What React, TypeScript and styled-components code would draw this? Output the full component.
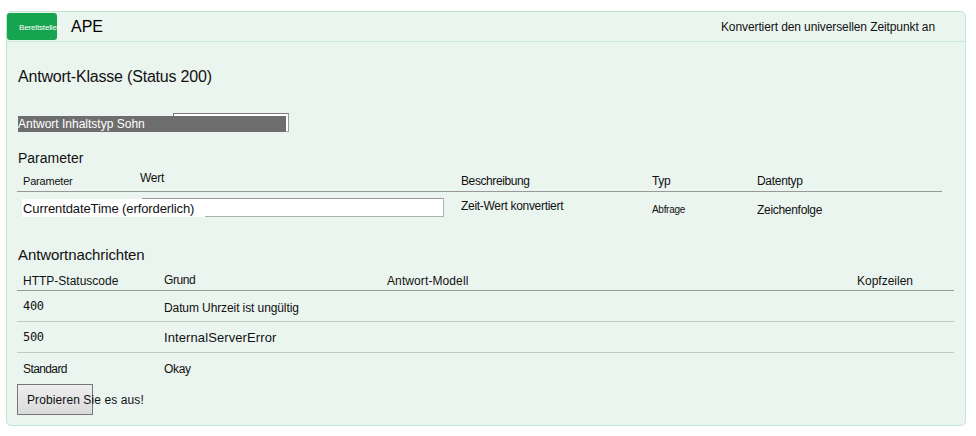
import React from "react";
import styled, { createGlobalStyle } from "styled-components";

const GlobalStyle = createGlobalStyle`
  html, body { margin: 0; padding: 0; background: #ffffff; }
  body { font-family: "Liberation Sans", Arial, sans-serif; color: #111; }
`;

const Page = styled.div`
  padding: 11px 10px 11px 6px;
`;

const Panel = styled.section`
  width: 958px;
  border: 1px solid #c3e6d0;
  border-radius: 5px;
  background: #ebf5ef;
  padding-bottom: 10px;
`;

const Header = styled.header`
  display: flex;
  align-items: center;
  height: 29px;
  border-bottom: 1px solid #c8e8d5;
`;

const DeployButton = styled.button`
  width: 50px;
  height: 27px;
  margin: 0;
  padding: 1px 0 0 12px;
  text-align: left;
  border: none;
  border-radius: 3px;
  background: #17a44e;
  color: #fff;
  font-family: "Liberation Sans", Arial, sans-serif;
  font-size: 8px;
  letter-spacing: -0.15px;
  white-space: nowrap;
  overflow: visible;
`;

const Title = styled.span`
  margin-left: 14px;
  font-size: 16px;
  color: #000;
`;

const Summary = styled.span`
  margin-left: auto;
  margin-right: 30px;
  font-size: 12px;
  letter-spacing: -0.1px;
  color: #111;
`;

const Body = styled.div`
  padding: 0 0 0 10px;
`;

const ClassHeading = styled.h2`
  margin: 25px 0 0 1px;
  font-size: 16px;
  font-weight: normal;
  line-height: 20px;
  letter-spacing: -0.2px;
`;

const ContentTypeRow = styled.div`
  display: grid;
  margin: 26px 0 0 1px;
  width: 271px;
  height: 20px;
`;

const ContentTypeSelect = styled.div`
  grid-area: 1 / 1;
  justify-self: end;
  width: 114px;
  height: 17px;
  background: #fff;
  border: 1px solid #7a7a7a;
  border-bottom-color: #aaa;
  border-right-color: #999;
`;

const ContentTypeLabel = styled.span`
  grid-area: 1 / 1;
  align-self: end;
  width: 268px;
  height: 16px;
  background: #6e6e6e;
  color: #fff;
  font-size: 12px;
  line-height: 16px;
  letter-spacing: 0;
  margin-bottom: 1px;
  white-space: nowrap;
`;

const SectionHeading = styled.h3<{ $top: number; $size?: number; $ls?: number }>`
  margin: ${(p) => p.$top}px 0 0 1px;
  font-size: ${(p) => p.$size ?? 14}px;
  font-weight: normal;
  line-height: 18px;
  letter-spacing: ${(p) => p.$ls ?? 0}px;
`;

const Grid = styled.div<{ $cols: string }>`
  display: grid;
  grid-template-columns: ${(p) => p.$cols};
`;

const HeadCell = styled.div<{ $h: number; $pt: number; $size?: number; $ls?: number }>`
  box-sizing: border-box;
  height: ${(p) => p.$h}px;
  padding: ${(p) => p.$pt}px 0 0 6px;
  font-size: ${(p) => p.$size ?? 12}px;
  line-height: 16px;
  letter-spacing: ${(p) => p.$ls ?? -0.3}px;
  white-space: nowrap;
`;

const HeadRule = styled.div`
  grid-column: 1 / -1;
  height: 1px;
  background: #989898;
`;

const ParamCell = styled.div<{ $size?: number; $pt: number }>`
  box-sizing: border-box;
  height: 45px;
  padding: ${(p) => p.$pt}px 0 0 6px;
  font-size: ${(p) => p.$size ?? 12}px;
  line-height: 16px;
  letter-spacing: -0.3px;
  white-space: nowrap;
`;

const ParamNameCell = styled.div`
  grid-column: 1 / 3;
  display: grid;
  grid-template-columns: 125px 302px;
  box-sizing: border-box;
  height: 45px;
  padding-top: 6px;
`;

const ParamName = styled.span`
  grid-area: 1 / 1 / 2 / 3;
  justify-self: start;
  align-self: start;
  z-index: 1;
  margin: 1px 0 0 5px;
  padding: 0 11px 0 1px;
  height: 18px;
  background: #fff;
  font-size: 13px;
  line-height: 19px;
  letter-spacing: -0.1px;
  white-space: nowrap;
`;

const ValueInput = styled.div`
  grid-area: 1 / 2;
  height: 17px;
  background: #fff;
  border: 1px solid #b0b0b0;
  border-top-color: #9a9a9a;
  border-left-color: #9a9a9a;
`;

const RespCell = styled.div<{ $mono?: boolean; $size?: number; $last?: boolean; $ls?: number; $dy?: number }>`
  height: 31px;
  box-sizing: border-box;
  border-bottom: ${(p) => (p.$last ? "none" : "1px solid #c6c6c6")};
  padding: ${(p) => p.$dy ?? 0}px 0 0 6px;
  display: flex;
  align-items: center;
  font-family: ${(p) =>
    p.$mono ? '"DejaVu Sans Mono", "Liberation Mono", monospace' : '"Liberation Sans", Arial, sans-serif'};
  font-size: ${(p) => p.$size ?? 12}px;
  letter-spacing: ${(p) => p.$ls ?? -0.3}px;
  white-space: nowrap;
`;

const TryButton = styled.button`
  display: block;
  margin: 0;
  width: 76px;
  height: 31px;
  padding: 0 0 0 9px;
  text-align: left;
  border: 1px solid #777;
  background: linear-gradient(#eeeeee, #dadada);
  font-family: "Liberation Sans", Arial, sans-serif;
  font-size: 12px;
  letter-spacing: 0.1px;
  color: #111;
  white-space: nowrap;
  overflow: visible;
`;

const paramCols = "117px 321px 191px 105px 191px";
const respCols = "141px 223px 470px 103px";

export default function App() {
  return (
    <>
      <GlobalStyle />
      <Page>
        <Panel>
          <Header>
            <DeployButton>Bereitstellen</DeployButton>
            <Title>APE</Title>
            <Summary>Konvertiert den universellen Zeitpunkt an</Summary>
          </Header>
          <Body>
            <ClassHeading>Antwort-Klasse (Status 200)</ClassHeading>
            <ContentTypeRow>
              <ContentTypeSelect />
              <ContentTypeLabel>Antwort Inhaltstyp Sohn</ContentTypeLabel>
            </ContentTypeRow>

            <SectionHeading $top={16}>Parameter</SectionHeading>
            <Grid $cols={paramCols}>
              <HeadCell $h={24} $pt={6} $size={11} $ls={-0.2}>Parameter</HeadCell>
              <HeadCell $h={24} $pt={3}>Wert</HeadCell>
              <HeadCell $h={24} $pt={6} $ls={-0.4}>Beschreibung</HeadCell>
              <HeadCell $h={24} $pt={6}>Typ</HeadCell>
              <HeadCell $h={24} $pt={6}>Datentyp</HeadCell>
              <HeadRule />
              <ParamNameCell>
                <ParamName>CurrentdateTime (erforderlich)</ParamName>
                <ValueInput />
              </ParamNameCell>
              <ParamCell $pt={6}>Zeit-Wert konvertiert</ParamCell>
              <ParamCell $size={10} $pt={10}>Abfrage</ParamCell>
              <ParamCell $pt={10}>Zeichenfolge</ParamCell>
            </Grid>

            <SectionHeading $top={9} $size={15} $ls={-0.1}>Antwortnachrichten</SectionHeading>
            <Grid $cols={respCols}>
              <HeadCell $h={26} $pt={9} $ls={0}>HTTP-Statuscode</HeadCell>
              <HeadCell $h={26} $pt={8} $ls={-0.4}>Grund</HeadCell>
              <HeadCell $h={26} $pt={9} $ls={0.1}>Antwort-Modell</HeadCell>
              <HeadCell $h={26} $pt={9} $ls={0}>Kopfzeilen</HeadCell>
              <HeadRule />
              <RespCell $mono $ls={-0.3}>400</RespCell>
              <RespCell $ls={-0.1} $dy={3}>Datum Uhrzeit ist ungültig</RespCell>
              <RespCell />
              <RespCell />
              <RespCell $mono $ls={-0.3}>500</RespCell>
              <RespCell $size={13} $ls={0.1}>InternalServerError</RespCell>
              <RespCell />
              <RespCell />
              <RespCell $last $ls={-0.6}>Standard</RespCell>
              <RespCell $last $ls={-0.3}>Okay</RespCell>
              <RespCell $last />
              <RespCell $last />
            </Grid>
            <TryButton>Probieren Sie es aus!</TryButton>
          </Body>
        </Panel>
      </Page>
    </>
  );
}
